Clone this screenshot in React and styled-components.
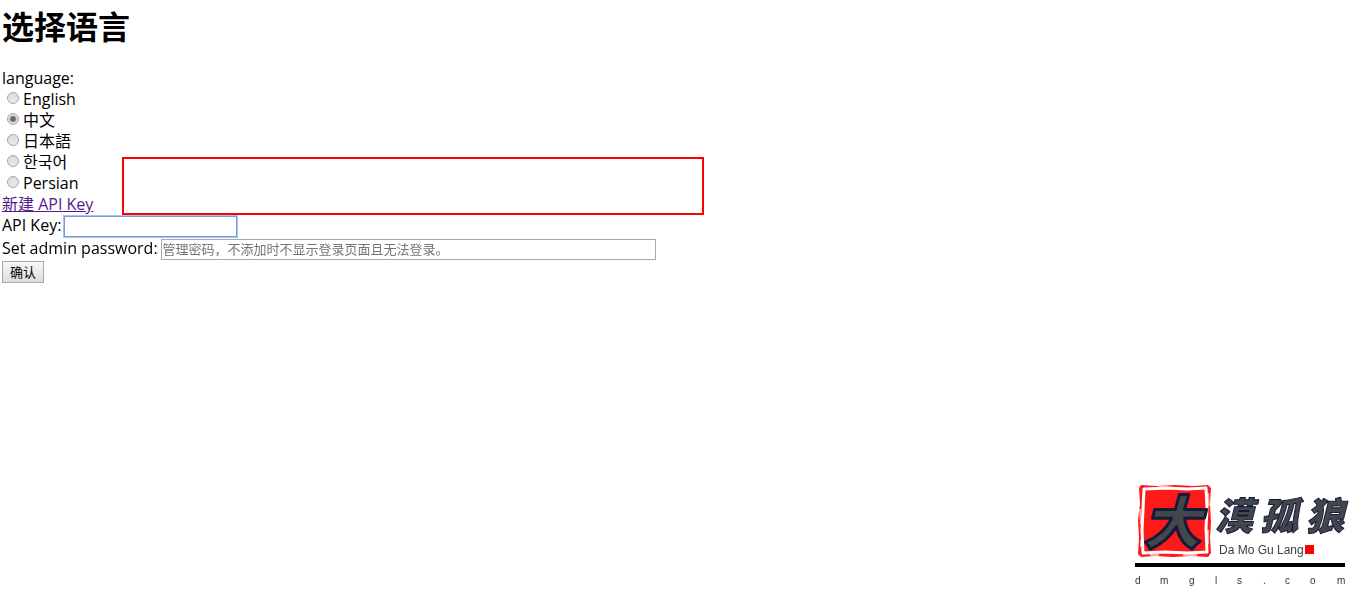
import React, { useState } from 'react';
import styled, { createGlobalStyle } from 'styled-components';

const GlobalStyle = createGlobalStyle`
  body {
    margin: 0;
    background: white;
    color: black;
    font-family: "Open Sans", "Noto Sans CJK SC", "Noto Sans CJK KR", sans-serif;
    font-size: 16px;
    line-height: 21px;
  }
`;

const Page = styled.main`
  padding: 6px 2px;
`;

const Title = styled.h1`
  margin: 0 0 20px;
  font-size: 32px;
  line-height: 42px;
  font-weight: 700;
`;

const LanguageGroup = styled.fieldset`
  margin: 0;
  padding: 0;
  border: 0;
`;

const GroupLabel = styled.legend`
  padding: 0;
`;

const Option = styled.label`
  display: flex;
  align-items: center;
  width: fit-content;
`;

const Radio = styled.input`
  appearance: none;
  width: 12px;
  height: 12px;
  margin: 0 4px 3px 5px;
  border: 1px solid #a6a6a6;
  border-radius: 50%;
  background: linear-gradient(#dcdcdc, #eaeaea);

  &:checked {
    background: radial-gradient(circle, #666 0 2px, #e4e4e4 4px);
  }
`;

const KeyLink = styled.a`
  color: #551a8b;
  text-decoration: underline;
`;

const Field = styled.div`
  display: flex;
  align-items: flex-start;
  gap: 3px;
  height: 23px;
`;

const TextInput = styled.input`
  box-sizing: border-box;
  width: ${props => props.$width}px;
  height: 21px;
  margin: 1px 0;
  padding: 0 1px 2px;
  border: 1px solid #a9a9a9;
  background: white;
  font-family: inherit;
  font-size: 13px;

  &::placeholder {
    color: #757575;
  }

  &:focus {
    border-color: #7a9cd3;
    outline: 1px solid #a3c3f3;
  }
`;

const SubmitButton = styled.button`
  display: block;
  height: 22px;
  padding: 0 7px;
  border: 1px solid #a9a9a9;
  background: linear-gradient(#f8f8f8, #dddddd);
  color: black;
  font-family: inherit;
  font-size: 13px;
  line-height: 20px;
`;

const Highlight = styled.div`
  position: absolute;
  top: 157px;
  left: 122px;
  box-sizing: border-box;
  width: 582px;
  height: 58px;
  border: 2px solid #f00;
  pointer-events: none;
`;

const Watermark = styled.div`
  position: fixed;
  right: 10px;
  bottom: 8px;
`;

const LogoSvg = styled.svg`
  display: block;
`;

const languages = ['English', '中文', '日本語', '한국어', 'Persian'];

const Logo = () => (
  <LogoSvg width="217" height="132" viewBox="0 -20 217 132" role="img" aria-label="大漠孤狼">
    {/* seal with a worn white frame */}
    <path d="M8 5L24 6 42 5 60 6 75 5 78 8 77 24 78 42 77 58 78 73 75 77 58 76 40 77 22 76 8 77 5 74 6 58 5 40 7 24 6 8Z" fill="#ff1a1a" />
    <path d="M11 9L35 8 54 9 73 8 74 28 73 48 74 72 55 73 32 72 10 73 9 50 10 30Z" fill="none" stroke="#fff" strokeWidth="3" strokeLinejoin="round" />
    <path d="M7 29l1 15M75 13l1 13M25 7h10M50 75h14M75 50v14M8 60v7M17 75h9" fill="none" stroke="#fff" strokeWidth="2" opacity="0.6" />
    <g fill="#41474b" stroke="#151b38" strokeLinejoin="round" fontFamily="Noto Sans CJK SC" fontWeight="900" fontStyle="italic">
      <text x="10" y="64" fontSize="58" strokeWidth="3">大</text>
      <g fontSize="38" strokeWidth="1">
        <text x="82" y="50">漠</text>
        <text x="127" y="50">孤</text>
        <text x="173" y="50">狼</text>
      </g>
    </g>
    <text x="86" y="74" fill="#3c4043" fontFamily="Liberation Sans" fontSize="12">Da Mo Gu Lang</text>
    <rect x="172" y="65" width="9" height="9" fill="#f00" />
    <rect x="2" y="83" width="210" height="4" />
    <g fill="#333" fontFamily="Liberation Sans" fontSize="10">
      {'dmgls.com'.split('').map((letter, index) => (
        <text key={index} x={[2, 27, 56, 82, 104, 130, 152, 177, 204][index]} y="104">{letter}</text>
      ))}
    </g>
  </LogoSvg>
);

const App = () => {
  const [language, setLanguage] = useState('中文');

  return (
    <>
      <GlobalStyle />
      <Page>
        <Title>选择语言</Title>
        <form onSubmit={e => e.preventDefault()}>
          <LanguageGroup>
            <GroupLabel>language:</GroupLabel>
            {languages.map(name => (
              <Option key={name}>
                <Radio
                  type="radio"
                  name="language"
                  value={name}
                  checked={language === name}
                  onChange={() => setLanguage(name)}
                />
                {name}
              </Option>
            ))}
          </LanguageGroup>
          <KeyLink href="#new-key">新建 API Key</KeyLink>
          <Field>
            <label htmlFor="apiKey">API Key:</label>
            <TextInput id="apiKey" $width={173} autoFocus />
          </Field>
          <Field>
            <label htmlFor="password">Set admin password:</label>
            <TextInput
              id="password"
              type="password"
              $width={495}
              placeholder="管理密码，不添加时不显示登录页面且无法登录。"
            />
          </Field>
          <SubmitButton type="submit">确认</SubmitButton>
        </form>
      </Page>
      <Highlight />
      <Watermark>
        <Logo />
      </Watermark>
    </>
  );
};

export default App;
